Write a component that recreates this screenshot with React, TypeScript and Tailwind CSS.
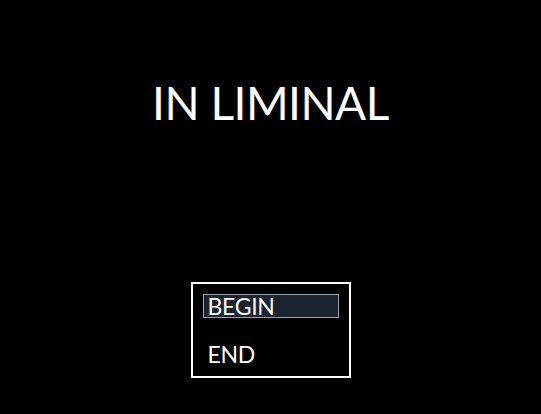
export default function App() {
  return (
    <div className="w-[541px] h-[414px] bg-black text-white flex flex-col items-center overflow-hidden" style={{ fontFamily: "Lato, 'Noto Sans', sans-serif" }}>
      <h1 className="mt-[75px] text-[46px] leading-[56px] font-normal tracking-[-0.5px]">IN LIMINAL</h1>
      <div className="mt-[151px] w-[160px] h-[96px] border-2 border-white p-[10px] flex flex-col gap-[25px]">
        <div className="h-[24px] bg-[#1b2330] border border-[#a0a4a8] flex items-center pl-[4px] text-[23px] leading-none tracking-[-0.3px]">BEGIN</div>
        <div className="h-[24px] flex items-center pl-[5px] text-[23px] leading-none tracking-[-0.3px]">END</div>
      </div>
    </div>
  );
}
